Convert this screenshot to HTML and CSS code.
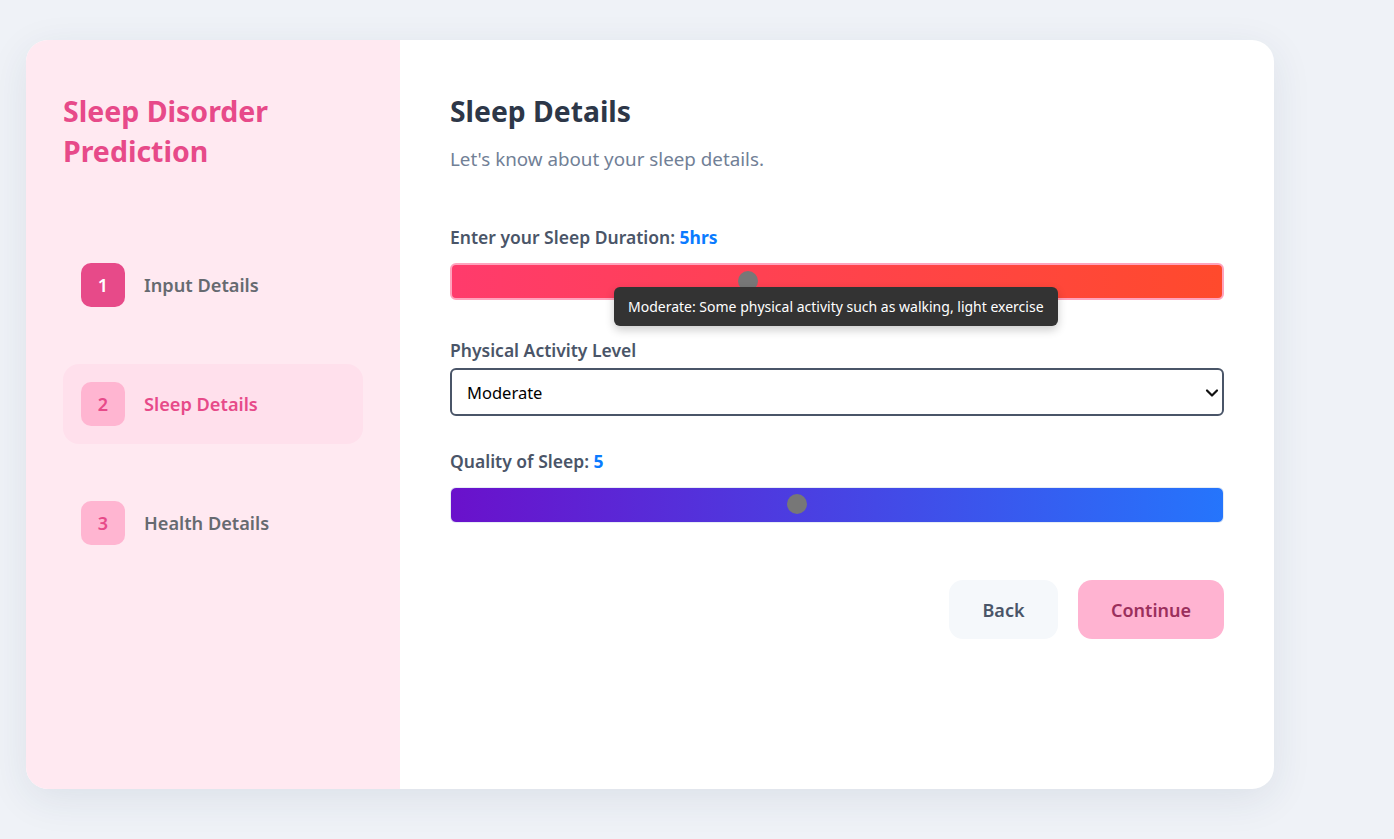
FILE: index.html
```html
<!DOCTYPE html>
<html lang="en">
<head>
<meta charset="utf-8">
<title>Sleep Disorder Prediction</title>
<link rel="stylesheet" href="styles.css">
</head>
<body>
<div class="card">
  <aside class="sidebar">
    <h1 class="brand">Sleep Disorder Prediction</h1>
    <ul class="steps">
      <li class="step done"><span class="badge">1</span><span class="step-label">Input Details</span></li>
      <li class="step active"><span class="badge">2</span><span class="step-label">Sleep Details</span></li>
      <li class="step"><span class="badge">3</span><span class="step-label">Health Details</span></li>
    </ul>
  </aside>
  <main class="main">
    <h2 class="title">Sleep Details</h2>
    <p class="subtitle">Let's know about your sleep details.</p>

    <div class="field field-first">
      <label class="label">Enter your Sleep Duration: <span class="val">5hrs</span></label>
      <div class="range range-red">
        <span class="thumb" style="left: 286px"></span>
        <div class="tooltip">Moderate: Some physical activity such as walking, light exercise</div>
      </div>
    </div>

    <div class="field field-select">
      <label class="label label-tight">Physical Activity Level</label>
      <div class="select-wrap">
        <select class="select">
          <option>Moderate</option>
        </select>
        <svg class="chev" width="14" height="10" viewBox="0 0 14 10"><path d="M2 2.5 L7 7.5 L12 2.5" fill="none" stroke="#111" stroke-width="2.2" stroke-linecap="round" stroke-linejoin="round"/></svg>
      </div>
    </div>

    <div class="field field-quality">
      <label class="label">Quality of Sleep: <span class="val">5</span></label>
      <div class="range range-blue">
        <span class="thumb" style="left: 336px"></span>
      </div>
    </div>

    <div class="actions">
      <button class="btn btn-back">Back</button>
      <button class="btn btn-next">Continue</button>
    </div>
  </main>
</div>
</body>
</html>
```

FILE: styles.css
```css
* { box-sizing: border-box; }
html, body { margin: 0; padding: 0; }
body {
  background: #eff2f7;
  font-family: "Noto Sans", "Open Sans", sans-serif;
  width: 1394px;
  height: 839px;
  overflow: hidden;
}
.card {
  margin: 40px 0 0 26px;
  width: 1248px;
  height: 749px;
  display: flex;
  background: #fff;
  border-radius: 22px;
  overflow: hidden;
  box-shadow: 0 10px 40px rgba(30, 50, 90, 0.09);
}
.sidebar {
  width: 374px;
  flex: none;
  background: #ffe9f1;
  padding: 51px 37px 0 37px;
}
.brand {
  margin: 0;
  font-size: 28.5px;
  line-height: 40px;
  font-weight: 700;
  color: #e74a89;
  width: 260px;
}
.steps {
  list-style: none;
  margin: 74px 0 0 0;
  padding: 0;
  display: flex;
  flex-direction: column;
  gap: 39px;
}
.step {
  display: flex;
  align-items: center;
  gap: 19px;
  height: 80px;
  padding: 0 18px;
  border-radius: 16px;
}
.step.active { background: #ffe0ec; }
.badge {
  width: 44px;
  height: 44px;
  border-radius: 10px;
  display: flex;
  align-items: center;
  justify-content: center;
  font-size: 18px;
  font-weight: 600;
  background: #ffb5d1;
  color: #e74a89;
}
.step.done .badge { background: #e74a89; color: #fff; }
.step-label {
  font-size: 18.2px;
  font-weight: 600;
  color: #666a70;
}
.step.active .step-label { color: #e74a89; }

.main {
  flex: 1;
  padding: 51px 50px 0 50px;
}
.title {
  margin: 0;
  font-size: 28.3px;
  line-height: 40px;
  font-weight: 700;
  color: #2d3748;
}
.subtitle {
  margin: 15px 0 0 0;
  font-size: 18.8px;
  line-height: 26px;
  color: #718096;
}
.field-first { margin-top: 54px; }
.field-select { margin-top: 39px; }
.field-quality { margin-top: 34px; }
.label {
  display: block;
  font-size: 17.5px;
  line-height: 22px;
  font-weight: 600;
  color: #4a5568;
  margin-bottom: 15px;
}
.label-tight { margin-bottom: 7px; }
.val { color: #0a7bff; font-weight: 700; }
.range {
  position: relative;
  height: 37px;
  border-radius: 6px;
}
.range-red {
  background: linear-gradient(90deg, #ff3b6c, #ff4a2c);
  border: 2px solid #ffa3bd;
}
.range-blue {
  height: 36px;
  background: linear-gradient(90deg, #6a11cb, #2575fc);
  border: 1px solid #e6edf5;
}
.thumb {
  position: absolute;
  top: 50%;
  width: 20px;
  height: 20px;
  margin-top: -11px;
  border-radius: 50%;
  background: #777;
}
.tooltip {
  position: absolute;
  left: 162px;
  top: 22px;
  background: #333;
  color: #fff;
  font-size: 14px;
  line-height: 20px;
  padding: 10px 14px 9px 14px;
  border-radius: 6px;
  white-space: nowrap;
  box-shadow: 0 4px 10px rgba(0,0,0,0.2);
  z-index: 2;
}
.select-wrap { position: relative; }
.select {
  appearance: none;
  -webkit-appearance: none;
  display: block;
  width: 100%;
  height: 48px;
  border: 2px solid #4a5568;
  border-radius: 6px;
  background: #fff;
  font-family: inherit;
  font-size: 16.5px;
  color: #000;
  padding: 0 15px;
}
.chev {
  position: absolute;
  right: 5px;
  top: 20px;
}
.actions {
  display: flex;
  justify-content: flex-end;
  gap: 20px;
  margin-top: 57px;
}
.btn {
  height: 59px;
  border: none;
  border-radius: 14px;
  font-family: inherit;
  font-size: 18px;
  font-weight: 600;
  padding: 0 20px;
}
.btn-back { width: 109px; background: #f5f8fb; color: #4a5568; }
.btn-next { width: 146px; background: #ffb3d1; color: #9b2f5c; }
```
